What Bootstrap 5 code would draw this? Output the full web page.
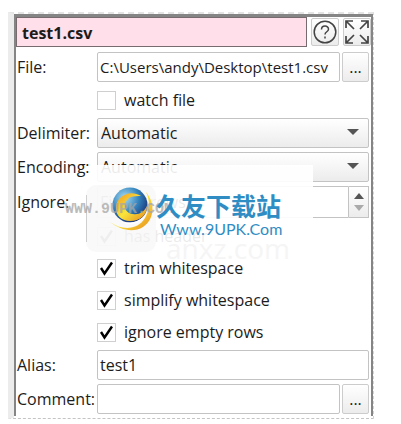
<!DOCTYPE html>
<html lang="en">
<head>
<meta charset="utf-8">
<meta name="viewport" content="width=device-width, initial-scale=1">
<title>test1.csv</title>
<link href="https://cdn.jsdelivr.net/npm/bootstrap@5.3.0/dist/css/bootstrap.min.css" rel="stylesheet">
<style>
body { font-family: "Open Sans", "Noto Sans", sans-serif; font-size: 16px; line-height: 24px; color: #1c1c1c; background: #fff; }
.shell { margin: 12px 27px 0 8px; padding-bottom: 2px; border-top: 2px dashed #e4e4e4; border-left: 6px solid #ececec; border-right: 1px dashed #d4d4d4; border-bottom: 1px dashed #c4c4c4; }
.pane { border: 2px solid #858585; border-top-width: 3px; border-bottom: 0; padding-bottom: 2px; }
.title-bar { height: 30px; background: #ffdfe9; border: 1px solid #776b70; font-weight: 700; padding: 2px 0 0 5px; }
.tool { width: 28px; height: 28px; }
.form-area { display: grid; grid-template-columns: 76px 1fr; column-gap: 4px; row-gap: 4px; padding: 5px 2px 0 1px; }
.form-area > * { min-width: 0; }
.field { height: 30px; border: 1px solid #c3c3c3; border-radius: 2px; padding: 0 2px; color: #1c1c1c; background-color: #fff; font-size: 16px; min-width: 0; }
.path-field { font-size: 15px; }
.with-button { gap: 2px; }
.btn-face { border: 1px solid #ccc; border-radius: 2px; background: linear-gradient(#fff, #ececec); color: #1c1c1c; padding: 0; line-height: 20px; }
.more { width: 27px; height: 30px; }
.pick { appearance: none; width: 100%; padding: 0 3px; background: linear-gradient(#fff, #ececec); }
.pick-wrap::after { content: ""; position: absolute; right: 10px; top: 11px; border: 6px solid transparent; border-top-color: #555; border-bottom: 0; pointer-events: none; }
.check-row { grid-column: 2; height: 28px; gap: 8px; }
.tick { appearance: none; width: 19px; height: 19px; margin: 0; border: 1px solid #cfcfcf; background: #fff center / 17px 17px no-repeat; flex: none; }
.tick:checked { background-image: url("data:image/svg+xml,%3Csvg xmlns='http://www.w3.org/2000/svg' viewBox='0 0 17 17'%3E%3Cpath d='M3 8 6.500 13.500 14 2.500' fill='none' stroke='%23000' stroke-width='2.4'/%3E%3C/svg%3E"); }
.spin, .spin .field { height: 32px; }
.spin .field { border-radius: 2px 0 0 2px; }
.steps { width: 20px; border: 1px solid #c3c3c3; border-left: 0; background: linear-gradient(#fff, #ececec); }
.steps button { border: 0; background: none; padding: 0; }
.veil { left: 80px; right: 58px; top: 148px; height: 87px; background: rgba(255,255,255,.91); pointer-events: none; }
.seal { left: 70px; top: 168px; width: 70px; height: 67px; border-radius: 10px; background: rgba(244,244,244,.5); }
.seal::before { content: ""; position: absolute; left: 0; top: 10px; bottom: 10px; width: 1px; background: #cfcfcf; }
.ghost { left: 150px; top: 213px; font-size: 28px; line-height: 36px; color: #f5f5f5; }
.orb { left: 94px; top: 168px; }
.brand { left: 140px; top: 171px; color: #2f8dc4; font: 700 25px/34px "Noto Sans CJK SC", sans-serif; white-space: nowrap; }
.site { left: 144px; top: 201px; color: #2f8dc4; font: 400 16px/22px Lato, sans-serif; }
.stamp { left: 49px; top: 184px; color: rgba(165,165,165,.75); font: 700 15px/18px "Liberation Mono", monospace; }
</style>
<script src="https://cdn.jsdelivr.net/npm/bootstrap@5.3.0/dist/js/bootstrap.bundle.min.js"></script>
</head>
<body>
<main class="shell">
<form class="pane position-relative">
  <header class="d-flex align-items-center">
    <div class="title-bar flex-grow-1 d-flex align-items-center me-1">test1.csv</div>
    <button type="button" class="btn-face tool d-flex align-items-center justify-content-center me-1" aria-label="Help">
      <svg width="24" height="24" viewBox="0 0 24 24" fill="none" stroke="#444" stroke-width="1.5"><circle cx="12" cy="12" r="10.8"/><path d="M8.500 9.500C8.500 5 15.500 5 15.500 9.200c0 2.600-3.500 2.500-3.500 5.300M12 16.500v2"/></svg>
    </button>
    <button type="button" class="btn-face tool d-flex align-items-center justify-content-center" aria-label="Expand">
      <svg width="24" height="24" viewBox="0 0 24 24" fill="none" stroke="#444" stroke-width="1.700"><path d="M9 9 1.500 1.500M1 8V1h7M15 9l7.500-7.500M16 1h7v7M9 15l-7.500 7.500M1 16v7h7M15 15l7.500 7.500M16 23h7v-7"/></svg>
    </button>
  </header>
  <div class="form-area align-items-center">
    <label for="file">File:</label>
    <div class="d-flex with-button"><input id="file" class="field path-field flex-grow-1" value="C:\Users\andy\Desktop\test1.csv"><button type="button" class="btn-face more">...</button></div>
    <div class="check-row d-flex align-items-center"><input id="watch" type="checkbox" class="tick"><label for="watch">watch file</label></div>
    <label for="delim">Delimiter:</label>
    <div class="pick-wrap position-relative d-flex"><select id="delim" class="field pick"><option>Automatic</option></select></div>
    <label for="enc">Encoding:</label>
    <div class="pick-wrap position-relative d-flex"><select id="enc" class="field pick"><option>Automatic</option></select></div>
    <label for="ignore">Ignore:</label>
    <div class="spin d-flex"><input id="ignore" class="field flex-grow-1" value="First 0 rows">
      <div class="steps d-flex flex-column justify-content-evenly align-items-center">
        <button type="button" class="d-flex" aria-label="Increase"><svg width="10" height="6" viewBox="0 0 10 6"><path d="M0 6 5 0l5 6z" fill="#555"/></svg></button>
        <button type="button" class="d-flex" aria-label="Decrease"><svg width="10" height="6" viewBox="0 0 10 6"><path d="M0 0h10L5 6z" fill="#aaa"/></svg></button>
      </div>
    </div>
    <div class="check-row d-flex align-items-center"><input id="header" type="checkbox" class="tick" checked><label for="header">has header</label></div>
    <div class="check-row d-flex align-items-center"><input id="trim" type="checkbox" class="tick" checked><label for="trim">trim whitespace</label></div>
    <div class="check-row d-flex align-items-center"><input id="simplify" type="checkbox" class="tick" checked><label for="simplify">simplify whitespace</label></div>
    <div class="check-row d-flex align-items-center"><input id="empty" type="checkbox" class="tick" checked><label for="empty">ignore empty rows</label></div>
    <label for="alias">Alias:</label>
    <input id="alias" class="field" value="test1">
    <label for="comment">Comment:</label>
    <div class="d-flex with-button"><input id="comment" class="field flex-grow-1"><button type="button" class="btn-face more">...</button></div>
  </div>
  <div class="veil position-absolute"></div>
  <div class="seal position-absolute"></div>
  <div class="ghost position-absolute">anxz.com</div>
  <svg class="orb position-absolute" width="46" height="50" viewBox="0 0 46 50" aria-hidden="true">
    <defs>
      <radialGradient id="blue" cx=".35" cy=".3" r=".8"><stop offset="0" stop-color="#a9dcf2"/><stop offset=".5" stop-color="#3484bd"/><stop offset="1" stop-color="#13246c"/></radialGradient>
      <linearGradient id="gold" x2="1" y2="1"><stop offset="0" stop-color="#f09a20"/><stop offset=".5" stop-color="#f9e43c"/><stop offset="1" stop-color="#e88a1b"/></linearGradient>
    </defs>
    <circle cx="20" cy="20" r="17.500" fill="url(#blue)"/>
    <path d="M31 11C19 4 6 12 6 23c0 8 6 13 14 13 10 0 17-6 17-15-3 6-8 9-14 8-10-1-11-13-2-17 3-1 7-1 10-1z" fill="url(#gold)"/>
    <path d="M37 27C33 36 22 39 10 37c10 4 22 3 27-10z" fill="#fff"/>
    <path d="M36 7c10 12 8 28-3 35-10 6-23 3-33-5 12 9 28 8 35-4 5-9 5-17 1-26z" fill="url(#gold)"/>
  </svg>
  <div class="stamp position-absolute">WWW.9UPK.COM</div>
  <div class="brand position-absolute">久友下载站</div>
  <div class="site position-absolute">Www.9UPK.Com</div>
</form>
</main>
</body>
</html>
